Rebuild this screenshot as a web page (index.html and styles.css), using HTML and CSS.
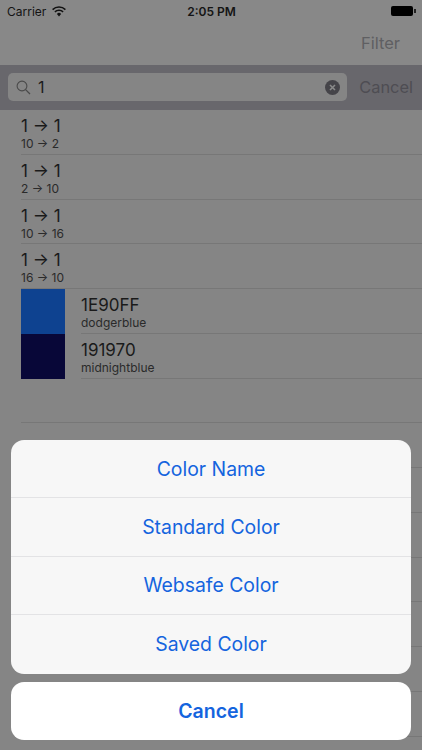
FILE: index.html
```html
<!DOCTYPE html>
<html lang="en">

<head>
    <meta charset="UTF-8">
    <meta name="viewport" content="width=device-width, initial-scale=1.0">
    <title>Color Search</title>
    <link rel="stylesheet" href="styles.css">
</head>

<body>
    <div class="screen">
        <div class="status-bar">
            <div class="status-left">
                <span>Carrier</span>
                <svg class="wifi" width="14" height="11" viewBox="0 0 14 11">
                    <path d="M0.6 3.6 A9.2 9.2 0 0 1 13.4 3.6" fill="none" stroke="#111" stroke-width="1.5" />
                    <path d="M2.9 5.9 A5.9 5.9 0 0 1 11.1 5.9" fill="none" stroke="#111" stroke-width="1.5" />
                    <path d="M4.9 7.9 A3 3 0 0 1 9.1 7.9 L7 10.4 Z" fill="#111" />
                </svg>
            </div>
            <div class="status-time">2:05 PM</div>
            <div class="battery"><span class="battery-body"></span><span class="battery-nub"></span></div>
        </div>

        <div class="nav-bar">
            <span class="nav-action">Filter</span>
        </div>

        <div class="search-bar">
            <div class="search-field">
                <svg class="search-icon" width="15" height="15" viewBox="0 0 15 15">
                    <circle cx="6" cy="6" r="4.9" fill="none" stroke="#4a4a4a" stroke-width="1.1" />
                    <path d="M9.6 9.6 L14 14" stroke="#4a4a4a" stroke-width="1.3" />
                </svg>
                <span class="search-text">1</span>
                <svg class="clear-icon" width="15" height="15" viewBox="0 0 15 15">
                    <circle cx="7.5" cy="7.5" r="7.5" fill="#454449" />
                    <path d="M5 5 L10 10 M10 5 L5 10" stroke="#8a8a8a" stroke-width="1.6" />
                </svg>
            </div>
            <span class="search-cancel">Cancel</span>
        </div>

        <div class="results">
            <div class="row">
                <div class="row-text">
                    <div class="row-title">1 → 1</div>
                    <div class="row-sub">10 → 2</div>
                </div>
            </div>
            <div class="row">
                <div class="row-text">
                    <div class="row-title">1 → 1</div>
                    <div class="row-sub">2 → 10</div>
                </div>
            </div>
            <div class="row">
                <div class="row-text">
                    <div class="row-title">1 → 1</div>
                    <div class="row-sub">10 → 16</div>
                </div>
            </div>
            <div class="row">
                <div class="row-text">
                    <div class="row-title">1 → 1</div>
                    <div class="row-sub">16 → 10</div>
                </div>
            </div>
            <div class="row color-row">
                <div class="swatch swatch-dodger"></div>
                <div class="row-text">
                    <div class="row-title">1E90FF</div>
                    <div class="row-sub">dodgerblue</div>
                </div>
            </div>
            <div class="row color-row">
                <div class="swatch swatch-midnight"></div>
                <div class="row-text">
                    <div class="row-title">191970</div>
                    <div class="row-sub">midnightblue</div>
                </div>
            </div>
            <div class="row"><div class="row-text"></div></div>
            <div class="row"><div class="row-text"></div></div>
            <div class="row"><div class="row-text"></div></div>
            <div class="row"><div class="row-text"></div></div>
            <div class="row"><div class="row-text"></div></div>
            <div class="row"><div class="row-text"></div></div>
            <div class="row"><div class="row-text"></div></div>
            <div class="row"><div class="row-text"></div></div>
        </div>

        <div class="action-sheet">
            <div class="sheet-group">
                <div class="sheet-item">Color Name</div>
                <div class="sheet-item">Standard Color</div>
                <div class="sheet-item">Websafe Color</div>
                <div class="sheet-item">Saved Color</div>
            </div>
            <div class="sheet-cancel">Cancel</div>
        </div>
    </div>
</body>

</html>
```

FILE: styles.css
```css
* {
    box-sizing: border-box;
}

body {
    margin: 0;
    background: #858585;
    font-family: Inter, "Liberation Sans", sans-serif;
    color: #1a1a1a;
    overflow: hidden;
}

.screen {
    position: relative;
    width: 422px;
    height: 750px;
    overflow: hidden;
}

.status-bar {
    height: 22px;
    padding: 0 6px 0 7px;
    display: grid;
    grid-template-columns: 1fr auto 1fr;
    align-items: center;
    background: #888888;
    font-size: 12px;
    color: #141414;
}

.status-left {
    display: flex;
    align-items: center;
    gap: 6px;
}

.status-time {
    font-weight: 600;
}

.battery {
    display: flex;
    align-items: center;
    justify-content: flex-end;
}

.battery-body {
    width: 22px;
    height: 10px;
    background: #000;
    border-radius: 2px;
}

.battery-nub {
    width: 2px;
    height: 4px;
    margin-left: 1px;
    background: #222;
}

.nav-bar {
    height: 43px;
    padding: 0 22px 2px 0;
    display: flex;
    align-items: center;
    justify-content: flex-end;
    background: #888888;
}

.nav-action {
    font-size: 16.5px;
    color: #5f5f62;
}

.search-bar {
    height: 45px;
    padding: 0 9px 1px 8px;
    display: flex;
    align-items: center;
    background: #68676c;
    gap: 12px;
}

.search-field {
    flex: 1;
    height: 28px;
    padding: 0 7px 0 8px;
    display: flex;
    align-items: center;
    background: #858585;
    border-radius: 5px;
}

.search-text {
    flex: 1;
    margin-left: 7px;
    font-size: 16px;
    color: #1c1c1c;
}

.search-cancel {
    font-size: 16.4px;
    color: #4e4d53;
}

.results {
    background: #858585;
}

.row {
    height: 44.75px;
    padding-left: 21px;
    display: flex;
}

.row-text {
    flex: 1;
    padding-top: 6px;
    border-bottom: 1px solid #777777;
}

.row-title {
    font-size: 17px;
    line-height: 20px;
    color: #1a1a1a;
}

.row-sub {
    margin-top: 1px;
    font-size: 12px;
    line-height: 14px;
    color: #2a2a2a;
}

.color-row .row-text {
    margin-left: 16px;
}

.swatch {
    width: 44px;
    height: 100%;
}

.swatch-dodger {
    background: #0e4290;
}

.swatch-midnight {
    background: #080738;
}

.action-sheet {
    position: absolute;
    left: 11px;
    top: 440px;
    width: 400px;
    display: flex;
    flex-direction: column;
    gap: 8px;
}

.sheet-group {
    background: #f7f7f7;
    border-radius: 13px;
    overflow: hidden;
}

.sheet-item {
    height: 58.4px;
    display: flex;
    align-items: center;
    justify-content: center;
    font-size: 19.4px;
    color: #1464de;
    border-bottom: 1px solid #e3e3e5;
}

.sheet-item:last-child {
    border-bottom: none;
}

.sheet-cancel {
    height: 58px;
    display: flex;
    align-items: center;
    justify-content: center;
    background: #fff;
    border-radius: 13px;
    font-size: 19.5px;
    font-weight: 600;
    color: #1464de;
}
```
